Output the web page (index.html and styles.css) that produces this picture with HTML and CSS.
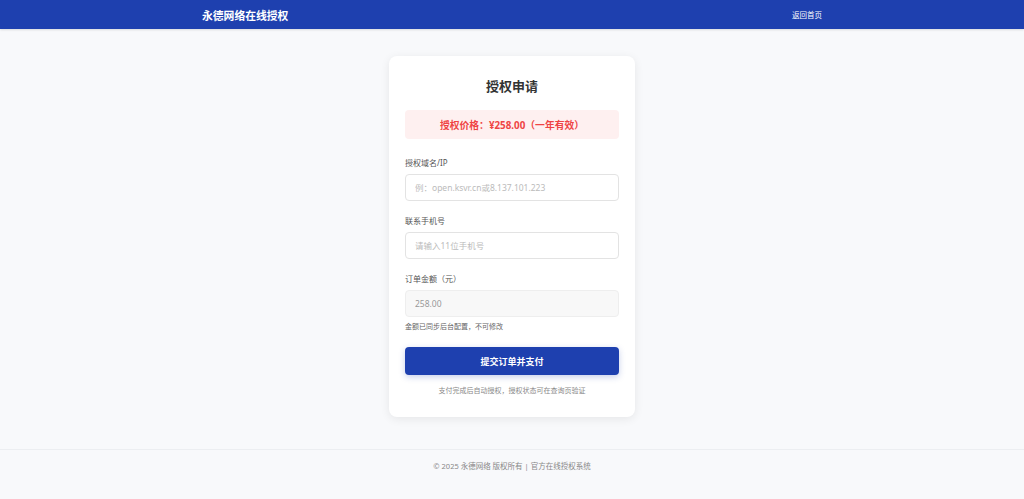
FILE: index.html
```html
<!DOCTYPE html>
<html lang="zh-CN">
<head>
<meta charset="utf-8">
<title>永德网络在线授权</title>
<link rel="stylesheet" href="styles.css">
</head>
<body>
<header class="topbar">
  <div class="topbar-inner">
    <div class="brand">永德网络在线授权</div>
    <a class="home-link" href="#">返回首页</a>
  </div>
</header>
<main class="main">
  <section class="card">
    <h1 class="card-title">授权申请</h1>
    <div class="price-box">授权价格：¥258.00（一年有效）</div>
    <div class="field">
      <label class="field-label">授权域名/IP</label>
      <input class="field-input" type="text" placeholder="例：open.ksvr.cn或8.137.101.223">
    </div>
    <div class="field">
      <label class="field-label">联系手机号</label>
      <input class="field-input" type="text" placeholder="请输入11位手机号">
    </div>
    <div class="field">
      <label class="field-label">订单金额（元）</label>
      <input class="field-input readonly" type="text" value="258.00" readonly>
      <div class="field-hint">金额已同步后台配置，不可修改</div>
    </div>
    <button class="submit-btn" type="button">提交订单并支付</button>
    <p class="caption">支付完成后自动授权，授权状态可在查询页验证</p>
  </section>
</main>
<footer class="footer">© 2025 永德网络 版权所有 | 官方在线授权系统</footer>
</body>
</html>
```
FILE: styles.css
```css
* { box-sizing: border-box; }
html, body { margin: 0; padding: 0; }
body {
  background: #f8f9fb;
  font-family: "Noto Sans", "Noto Sans CJK SC", sans-serif;
  color: #333;
}
.topbar {
  background: #1e40af;
  height: 29px;
  box-shadow: 0 1px 2px rgba(0,0,0,0.12);
}
.topbar-inner {
  width: 620px;
  margin: 0 auto;
  height: 29px;
  display: flex;
  align-items: center;
  justify-content: space-between;
}
.brand {
  color: #fff;
  font-weight: 700;
  font-size: 10.8px;
}
.home-link {
  color: #fff;
  font-size: 7.5px;
  text-decoration: none;
}
.main {
  display: flex;
  justify-content: center;
  padding-top: 27px;
}
.card {
  width: 246px;
  background: #fff;
  border-radius: 8px;
  box-shadow: 0 2px 10px rgba(0,0,0,0.08);
  padding: 20px 16px 21px;
}
.card-title {
  margin: 0 0 14px;
  text-align: center;
  font-size: 13px;
  line-height: 20px;
  font-weight: 700;
  color: #333;
}
.price-box {
  background: #fef0f0;
  border-radius: 4px;
  height: 29px;
  display: flex;
  align-items: center;
  justify-content: center;
  color: #ef4444;
  font-weight: 700;
  font-size: 9.8px;
  margin-bottom: 18px;
}
.field { margin-bottom: 14px; }
.field-label {
  display: block;
  font-size: 8px;
  line-height: 12px;
  color: #555;
  margin-bottom: 5px;
}
.field-input {
  display: block;
  width: 100%;
  height: 27px;
  border: 1px solid #e3e3e3;
  border-radius: 4px;
  padding: 0 9px;
  font-family: "Noto Sans", "Noto Sans CJK SC", sans-serif;
  font-size: 8.5px;
  color: #333;
  background: #fff;
  outline: none;
}
.field-input::placeholder { color: #bbb; }
.field-input.readonly {
  background: #f8f8f8;
  border-color: #eeeeee;
  color: #999;
}
.field-hint {
  margin-top: 5px;
  font-size: 7px;
  line-height: 10px;
  color: #666;
}
.field:last-of-type { margin-bottom: 15px; }
.submit-btn {
  display: block;
  width: 100%;
  height: 28px;
  border: none;
  border-radius: 4px;
  background: #1e40af;
  color: #fff;
  font-family: "Noto Sans", "Noto Sans CJK SC", sans-serif;
  font-weight: 700;
  font-size: 9px;
  box-shadow: 0 2px 6px rgba(30,64,175,0.25);
  cursor: pointer;
}
.caption {
  margin: 11px 0 0;
  text-align: center;
  font-size: 7px;
  line-height: 10px;
  color: #888;
}
.footer {
  margin-top: 32px;
  border-top: 1px solid #eceef1;
  text-align: center;
  font-size: 7.5px;
  color: #888;
  padding-top: 11px;
  line-height: 10px;
}
```
